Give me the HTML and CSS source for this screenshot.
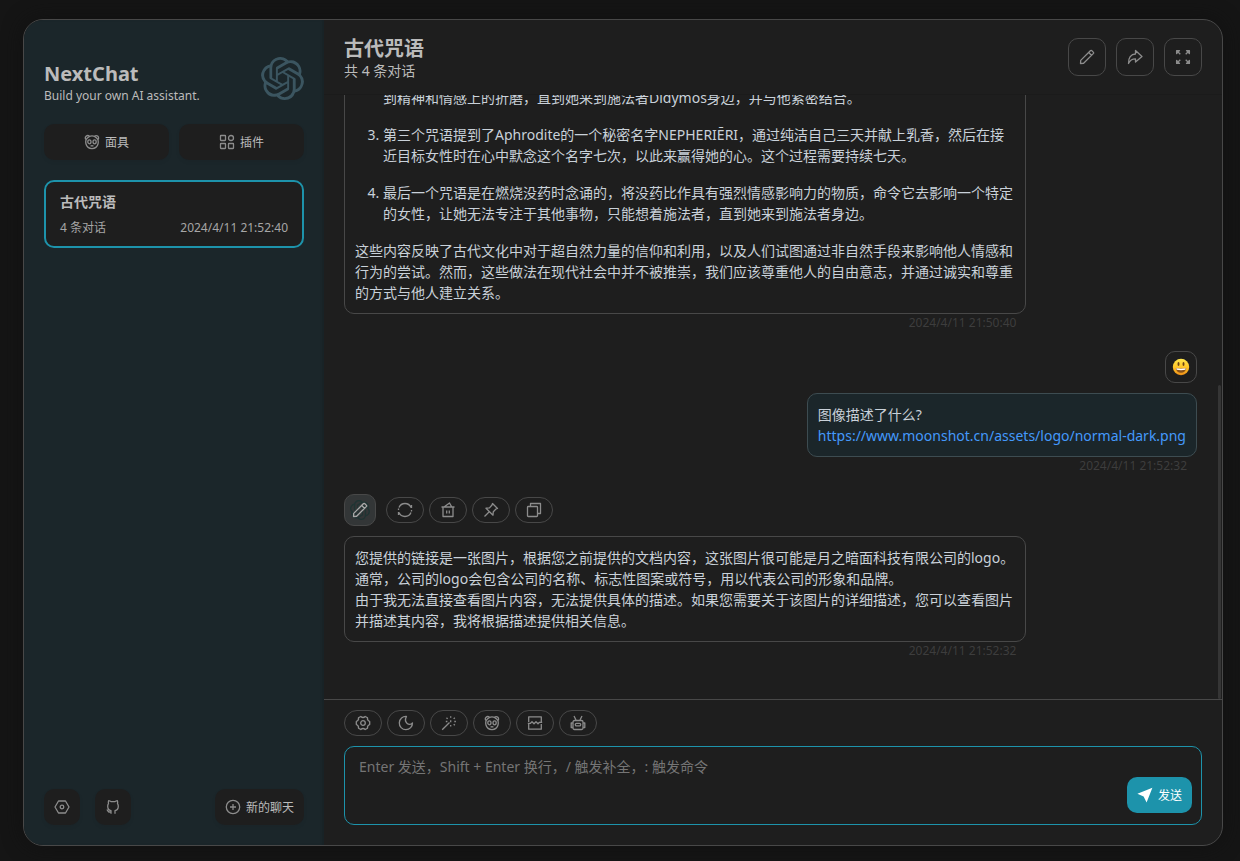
FILE: index.html
```html
<!DOCTYPE html>
<html lang="zh-CN">
<head>
<meta charset="utf-8">
<meta name="viewport" content="width=device-width, initial-scale=1">
<title>NextChat</title>
<link rel="stylesheet" href="styles.css">
</head>
<body>
<svg class="sprite" aria-hidden="true">
  <symbol id="openai" viewBox="0 0 24 24"><path fill="currentColor" d="M22.2819 9.8211a5.9847 5.9847 0 0 0-.5157-4.9108 6.0462 6.0462 0 0 0-6.5098-2.9A6.0651 6.0651 0 0 0 4.9807 4.1818a5.9847 5.9847 0 0 0-3.9977 2.9 6.0462 6.0462 0 0 0 .7427 7.0966 5.98 5.98 0 0 0 .511 4.9107 6.051 6.051 0 0 0 6.5146 2.9001A5.9847 5.9847 0 0 0 13.2599 24a6.0557 6.0557 0 0 0 5.7718-4.2058 5.9894 5.9894 0 0 0 3.9977-2.9001 6.0557 6.0557 0 0 0-.7475-7.0729zm-9.022 12.6081a4.4755 4.4755 0 0 1-2.8764-1.0408l.1419-.0804 4.7783-2.7582a.7948.7948 0 0 0 .3927-.6813v-6.7369l2.02 1.1686a.071.071 0 0 1 .038.052v5.5826a4.504 4.504 0 0 1-4.4945 4.4944zm-9.6607-4.1254a4.4708 4.4708 0 0 1-.5346-3.0137l.142.0852 4.783 2.7582a.7712.7712 0 0 0 .7806 0l5.8428-3.3685v2.3324a.0804.0804 0 0 1-.0332.0615L9.74 19.9502a4.4992 4.4992 0 0 1-6.1408-1.6464zM2.3408 7.8956a4.485 4.485 0 0 1 2.3655-1.9728V11.6a.7664.7664 0 0 0 .3879.6765l5.8144 3.3543-2.0201 1.1685a.0757.0757 0 0 1-.071 0l-4.8303-2.7865A4.504 4.504 0 0 1 2.3408 7.872zm16.5963 3.8558L13.1038 8.364 15.1192 7.2a.0757.0757 0 0 1 .071 0l4.8303 2.7913a4.4944 4.4944 0 0 1-.6765 8.1042v-5.6772a.79.79 0 0 0-.407-.667zm2.0107-3.0231l-.142-.0852-4.7735-2.7818a.7759.7759 0 0 0-.7854 0L9.409 9.2297V6.8974a.0662.0662 0 0 1 .0284-.0615l4.8303-2.7866a4.4992 4.4992 0 0 1 6.6802 4.66zM8.3065 12.863l-2.02-1.1638a.0804.0804 0 0 1-.038-.0567V6.0742a4.4992 4.4992 0 0 1 7.3757-3.4537l-.142.0805L8.704 5.459a.7948.7948 0 0 0-.3927.6813zm1.0976-2.3654l2.602-1.4998 2.6069 1.4998v2.9994l-2.5974 1.4997-2.6067-1.4997Z"/></symbol>
  <symbol id="mask" viewBox="0 0 16 16"><path d="M2.1 5.6A2.2 2.2 0 1 1 5.4 2.3Q8 1.3 10.6 2.3A2.2 2.2 0 1 1 13.9 5.6Q14.6 8 14 10C13.2 13 10.8 14.6 8 14.6S2.8 13 2 10Q1.400 8 2.1 5.600ZM2.300 5.300Q3.500 3.300 5.400 2.600M13.700 5.300Q12.500 3.300 10.600 2.600M6.600 12.200q1.400-1.200 2.800 0"/><ellipse cx="5.400" cy="7.800" rx="1.600" ry="2"/><ellipse cx="10.600" cy="7.800" rx="1.600" ry="2"/></symbol>
  <symbol id="plugin" viewBox="0 0 16 16"><rect x="1.500" y="1.500" width="5" height="5" rx=".5"/><circle cx="12" cy="4" r="2.500"/><rect x="1.500" y="9.500" width="5" height="5" rx=".5"/><rect x="9.500" y="9.500" width="5" height="5" rx=".5"/></symbol>
  <symbol id="hexagon" viewBox="0 0 16 16"><path d="M4.500 2h7L15 8l-3.500 6h-7L1 8Z"/><circle cx="8" cy="8" r="1.800"/></symbol>
  <symbol id="github" viewBox="0 0 16 16"><path d="M6 14.700v-3.100C3.500 11.200 2.700 9.400 2.700 7.300c0-1.200.3-2 .8-2.600-.3-1-.2-2 .1-3.100 1.100.1 1.900.5 2.700 1.100h3.400c.8-.6 1.600-1 2.700-1.100.3 1.100.4 2.100.1 3.100.5.6.8 1.400.8 2.600 0 2.100-.8 3.900-3.300 4.300v3.100M6 13H4.300c-1.500 0-1.300-2.200-2.600-2.200"/></symbol>
  <symbol id="add" viewBox="0 0 16 16"><circle cx="8" cy="8" r="6.700"/><path d="M8 5v6M5 8h6"/></symbol>
  <symbol id="pencil" viewBox="0 0 16 16"><path d="M1.500 14.500l.2-3.100L11.600 1.500q.5-.4 1 0l1.900 1.900q.4.5 0 1L4.600 14.300ZM9.700 3.500l2.800 2.800"/></symbol>
  <symbol id="share" viewBox="0 0 16 16"><path d="M8.500 1.500l6.500 6L8.500 13V9.800C5.500 9.800 3 11 1.500 14.500 1.200 9 4 5 8.500 5Z"/></symbol>
  <symbol id="expand" viewBox="0 0 16 16"><path fill="currentColor" d="M1.600 1.600H4.500L1.600 4.500ZM14.400 1.600H11.500L14.400 4.500ZM1.600 14.400H4.500L1.600 11.500ZM14.400 14.400H11.500L14.400 11.500Z"/><path d="M2 2l3.300 3.300M14 2l-3.300 3.300M2 14l3.300-3.300M14 14l-3.300-3.300"/></symbol>
  <symbol id="reload" viewBox="0 0 16 16"><path d="M2 5.500A6.500 6.500 0 0 1 14 5.500M14.500 3v3M14 10.500A6.500 6.500 0 0 1 2 10.500M1.500 13v-3M1.500 8V6.500M14.500 8v1.500"/></symbol>
  <symbol id="trash" viewBox="0 0 16 16"><path d="M3 5h10v9.500H3ZM1.500 5h13M4.300 4.800L9.500 1l2.200 3.800M6.700 8.500v3M9.300 8.500v3"/></symbol>
  <symbol id="pin" viewBox="0 0 16 16"><path d="M9.500 1.500l5 5-1.500.5-2.700 2.700-.3 3.500-7-7 3.500-.3L9 3ZM6 10l-4.500 4.500"/></symbol>
  <symbol id="copy" viewBox="0 0 16 16"><rect x="1.500" y="4.500" width="10" height="10" rx=".8"/><path d="M4.500 4V1.500h10v10H12"/></symbol>
  <symbol id="gear" viewBox="0 0 16 16"><path d="M5.800 1.500Q8 3.500 10.200 1.500L12.500 2.800Q12 5.300 14.700 6.500v3Q12 10.700 12.500 13.200L10.200 14.500Q8 12.500 5.800 14.500L3.500 13.200Q4 10.700 1.300 9.500v-3Q4 5.300 3.500 2.800Z"/><circle cx="8" cy="8" r="2.300"/></symbol>
  <symbol id="moon" viewBox="0 0 16 16"><path d="M8.500 1.500A6.600 6.600 0 1 0 14.500 7.800C11.500 11.800 5.200 7.500 8.500 1.500Z"/></symbol>
  <symbol id="wand" viewBox="0 0 16 16"><path d="M1.200 14.800l7.300-7.300M9.700 1.200v1.600M5.500 2.800l1.100 1.100M13.800 2.800l-1.100 1.100M4.800 6.500h1.600M13.300 6.500h1.600M12.700 9.200l1.100 1.100M9.700 10v1.600M9.700 5.300v2"/></symbol>
  <symbol id="break" viewBox="0 0 16 16"><path d="M1.700 7V1.800h12.600V7M1.700 9v5.200h12.600V9M.8 8.300h2.700l1.500-1.500 2 2 2-2 2 2 1.500-1.500h2.700"/></symbol>
  <symbol id="robot" viewBox="0 0 16 16"><path d="M4 1l2 4M12 1l-2 4M2.800 8H1.200v4.500h1.600M13.200 8h1.600v4.500h-1.600"/><rect x="3" y="5.500" width="10" height="9" rx="1.500"/><rect x="5.300" y="8.300" width="5.400" height="2.600" rx="1.200"/></symbol>
  <symbol id="plane" viewBox="0 0 16 16"><path fill="currentColor" stroke="none" d="M15.400.8L.4 6.800l6.200 2.600L9.600 15.500Z"/></symbol>
  <symbol id="smile" viewBox="0 0 18 18"><circle cx="9" cy="9" r="8.200" fill="url(#face)" stroke="none"/><ellipse cx="6.500" cy="6" rx="1" ry="1.900" fill="#6b4317" stroke="none"/><ellipse cx="11.500" cy="6" rx="1" ry="1.900" fill="#6b4317" stroke="none"/><path d="M3.800 10Q9 11 14.200 10C14 13 12 14.700 9 14.700S4 13 3.800 10Z" fill="#8a5218" stroke="none"/><path d="M4.200 10.300Q9 11.200 13.800 10.300L13.400 11.700Q9 12.600 4.600 11.700Z" fill="#fff" stroke="none"/></symbol>
  <defs><linearGradient id="face" x1="0" y1="0" x2="0" y2="1"><stop offset="0" stop-color="#ffe64b"/><stop offset=".5" stop-color="#ffc629"/><stop offset="1" stop-color="#ee8f18"/></linearGradient></defs>
</svg>

<div class="window">
  <aside class="sidebar">
    <header class="brand">
      <div>
        <h1 class="brand-title">NextChat</h1>
        <p class="brand-sub">Build your own AI assistant.</p>
      </div>
      <svg class="brand-logo"><use href="#openai"/></svg>
    </header>
    <nav class="shortcuts">
      <button class="side-button"><svg class="icon"><use href="#mask"/></svg>面具</button>
      <button class="side-button"><svg class="icon"><use href="#plugin"/></svg>插件</button>
    </nav>
    <article class="chat-item">
      <h2 class="chat-item-title">古代咒语</h2>
      <div class="chat-item-info"><span>4 条对话</span><time>2024/4/11 21:52:40</time></div>
    </article>
    <footer class="side-footer">
      <button class="side-button" aria-label="设置"><svg class="icon"><use href="#hexagon"/></svg></button>
      <a class="side-button" href="#" aria-label="GitHub"><svg class="icon"><use href="#github"/></svg></a>
      <button class="side-button new-chat"><svg class="icon"><use href="#add"/></svg>新的聊天</button>
    </footer>
  </aside>

  <main class="main">
    <header class="chat-header">
      <div>
        <h2 class="chat-title">古代咒语</h2>
        <p class="chat-sub">共 4 条对话</p>
      </div>
      <div class="header-actions">
        <button class="square-button" aria-label="编辑"><svg class="icon"><use href="#pencil"/></svg></button>
        <button class="square-button" aria-label="分享"><svg class="icon"><use href="#share"/></svg></button>
        <button class="square-button" aria-label="全屏"><svg class="icon"><use href="#expand"/></svg></button>
      </div>
    </header>

    <section class="messages">
      <div class="message">
        <div class="bubble">
          <ol class="list" start="2">
            <li class="continued">到精神和情感上的折磨，直到她来到施法者Didymos身边，并与他紧密结合。</li>
            <li>第三个咒语提到了Aphrodite的一个秘密名字NEPHERIĒRI，通过纯洁自己三天并献上乳香，然后在接近目标女性时在心中默念这个名字七次，以此来赢得她的心。这个过程需要持续七天。</li>
            <li>最后一个咒语是在燃烧没药时念诵的，将没药比作具有强烈情感影响力的物质，命令它去影响一个特定的女性，让她无法专注于其他事物，只能想着施法者，直到她来到施法者身边。</li>
          </ol>
          <p>这些内容反映了古代文化中对于超自然力量的信仰和利用，以及人们试图通过非自然手段来影响他人情感和行为的尝试。然而，这些做法在现代社会中并不被推崇，我们应该尊重他人的自由意志，并通过诚实和尊重的方式与他人建立关系。</p>
        </div>
        <time class="date">2024/4/11 21:50:40</time>
      </div>

      <div class="message user">
        <div class="message-head"><span class="avatar"><svg class="emoji"><use href="#smile"/></svg></span></div>
        <div class="bubble">
          <p>图像描述了什么?<br><a href="#">https://www.moonshot.cn/assets/logo/normal-dark.png</a></p>
        </div>
        <time class="date">2024/4/11 21:52:32</time>
      </div>

      <div class="message">
        <div class="message-head">
          <button class="avatar bot" aria-label="编辑消息"><svg class="bot-logo"><use href="#openai"/></svg><svg class="icon"><use href="#pencil"/></svg></button>
          <div class="pills">
            <button class="pill" aria-label="重试"><svg class="icon"><use href="#reload"/></svg></button>
            <button class="pill" aria-label="删除"><svg class="icon"><use href="#trash"/></svg></button>
            <button class="pill" aria-label="固定"><svg class="icon"><use href="#pin"/></svg></button>
            <button class="pill" aria-label="复制"><svg class="icon"><use href="#copy"/></svg></button>
          </div>
        </div>
        <div class="bubble">
          <p>您提供的链接是一张图片，根据您之前提供的文档内容，这张图片很可能是月之暗面科技有限公司的logo。通常，公司的logo会包含公司的名称、标志性图案或符号，用以代表公司的形象和品牌。<br>由于我无法直接查看图片内容，无法提供具体的描述。如果您需要关于该图片的详细描述，您可以查看图片并描述其内容，我将根据描述提供相关信息。</p>
        </div>
        <time class="date">2024/4/11 21:52:32</time>
      </div>
      <span class="scroll-thumb"></span>
    </section>

    <footer class="composer">
      <div class="pills">
        <button class="pill" aria-label="对话设置"><svg class="icon"><use href="#gear"/></svg></button>
        <button class="pill" aria-label="深色模式"><svg class="icon"><use href="#moon"/></svg></button>
        <button class="pill" aria-label="快捷指令"><svg class="icon"><use href="#wand"/></svg></button>
        <button class="pill" aria-label="所有面具"><svg class="icon"><use href="#mask"/></svg></button>
        <button class="pill" aria-label="清除聊天"><svg class="icon"><use href="#break"/></svg></button>
        <button class="pill" aria-label="模型"><svg class="icon"><use href="#robot"/></svg></button>
      </div>
      <div class="input-wrap">
        <textarea class="input" rows="3" aria-label="消息" placeholder="Enter 发送，Shift + Enter 换行，/ 触发补全，: 触发命令"></textarea>
        <button class="send"><svg class="icon"><use href="#plane"/></svg>发送</button>
      </div>
    </footer>
  </main>
</div>
</body>
</html>
```

FILE: styles.css
```css
* {
  box-sizing: border-box;
}

body {
  display: flex;
  height: 100vh;
  margin: 0;
  padding: 19px 17px 15px 23px;
  background: #151515;
  color: #bbbbbb;
  font-family: "Noto Sans", "Noto Sans CJK SC", sans-serif;
  font-size: 14px;
}

h1, h2, p, ol {
  margin: 0;
}

button, textarea {
  font: inherit;
  color: inherit;
}

button, .side-button {
  cursor: pointer;
}

.sprite {
  position: absolute;
  width: 0;
  height: 0;
}

.icon {
  flex: none;
  width: 16px;
  height: 16px;
  fill: none;
  stroke: currentColor;
  stroke-width: 1.3;
  stroke-linejoin: round;
  color: #8c8c8c;
}

.window {
  display: flex;
  flex: 1;
  min-width: 0;
  overflow: hidden;
  border: 1px solid #484848;
  border-radius: 20px;
  background: #1e1e1e;
  box-shadow: 0 0 20px #111111;
}

/* Sidebar */

.sidebar {
  display: flex;
  flex: none;
  flex-direction: column;
  width: 300px;
  padding: 20px;
  background: #1b262a;
  box-shadow: inset -2px 0 2px rgba(0, 0, 0, 0.1);
}

.brand {
  display: flex;
  justify-content: space-between;
  padding: 17px 0 20px;
}

.brand-title {
  padding-top: 3px;
  font-size: 20px;
  line-height: 28px;
}

.brand-sub {
  font-size: 12px;
  line-height: 16px;
}

.brand-logo {
  width: 43px;
  height: 43px;
  color: #3b5560;
}

.shortcuts {
  display: grid;
  grid-template-columns: 1fr 1fr;
  gap: 10px;
  margin-bottom: 20px;
}

.side-button {
  display: flex;
  align-items: center;
  justify-content: center;
  gap: 5px;
  height: 36px;
  padding: 0 10px;
  border: 0;
  border-radius: 10px;
  background: #1e1e1e;
  box-shadow: 0 2px 4px rgba(0, 0, 0, 0.05);
  font-size: 12px;
}

.chat-item {
  padding: 10px 14px;
  border: 2px solid #1d93ab;
  border-radius: 10px;
  background: #1e1e1e;
}

.chat-item-title {
  font-size: 14px;
  line-height: 20px;
}

.chat-item-info {
  display: flex;
  justify-content: space-between;
  margin-top: 8px;
  color: #a6a6a6;
  font-size: 12px;
  line-height: 16px;
}

.side-footer {
  display: flex;
  gap: 15px;
  margin-top: auto;
}

.new-chat {
  margin-left: auto;
}

/* Chat */

.main {
  display: flex;
  flex: 1;
  flex-direction: column;
  min-width: 0;
}

.chat-header {
  display: flex;
  align-items: center;
  justify-content: space-between;
  height: 75px;
  padding: 0 20px;
  border-bottom: 1px solid #1b1b1b;
}

.chat-title {
  padding-top: 4px;
  font-size: 20px;
  line-height: 24px;
}

.chat-sub {
  line-height: 20px;
}

.header-actions {
  display: flex;
  gap: 10px;
}

.square-button {
  display: flex;
  align-items: center;
  justify-content: center;
  width: 38px;
  height: 38px;
  padding: 0;
  border: 1px solid #484848;
  border-radius: 10px;
  background: none;
}

.messages {
  position: relative;
  display: flex;
  flex: 1;
  flex-direction: column;
  justify-content: flex-end;
  gap: 20px;
  min-height: 0;
  padding: 0 25px 40px 20px;
  overflow: hidden;
}

.message {
  display: flex;
  flex-direction: column;
  align-items: flex-start;
}

.message.user {
  align-items: flex-end;
}

.message-head {
  display: flex;
  align-items: center;
  gap: 10px;
  margin-bottom: 10px;
}

.avatar {
  position: relative;
  display: flex;
  align-items: center;
  justify-content: center;
  width: 32px;
  height: 32px;
  padding: 0;
  border: 1px solid #484848;
  border-radius: 10px;
  background: none;
}

.avatar.bot {
  background: #333637;
}

.avatar.bot .icon {
  position: relative;
  color: #a8a8a8;
}

.bot-logo {
  position: absolute;
  inset: 5px;
  width: 20px;
  height: 20px;
  color: #1f3433;
}

.emoji {
  width: 18px;
  height: 18px;
}

.pills {
  display: flex;
  gap: 5px;
}

.pill {
  display: flex;
  align-items: center;
  justify-content: center;
  width: 38px;
  height: 26px;
  padding: 0;
  border: 1px solid #484848;
  border-radius: 20px;
  background: none;
}

.bubble {
  max-width: 80%;
  padding: 10px;
  border: 1px solid #484848;
  border-radius: 10px;
  color: #c9d1d9;
  line-height: 21px;
}

.user .bubble {
  border-color: #3d4c51;
  background: #1b262a;
}

.bubble a {
  color: #4499fb;
  text-decoration: none;
}

.list {
  margin-bottom: 16px;
  padding-left: 28px;
}

.list li + li {
  margin-top: 16px;
}

.list .continued {
  list-style: none;
}

.date {
  align-self: flex-end;
  padding-right: 10px;
  color: #3d3d3d;
  font-size: 12px;
  line-height: 17px;
}

.message:not(.user) > .date {
  margin-right: 20%;
}

.scroll-thumb {
  position: absolute;
  right: 1px;
  bottom: 0;
  width: 3px;
  height: 52%;
  border-radius: 2px;
  background: #353535;
}

/* Composer */

.composer {
  padding: 10px 20px 20px;
  border-top: 1px solid #484848;
}

.input-wrap {
  position: relative;
  display: flex;
  margin-top: 10px;
}

.input {
  flex: 1;
  height: 79px;
  padding: 10px 90px 10px 14px;
  border: 1px solid #1d93ab;
  border-radius: 10px;
  outline: 0;
  background: transparent;
  line-height: 20px;
  resize: none;
}

.input::placeholder {
  color: #757575;
}

.send {
  position: absolute;
  right: 10px;
  bottom: 12px;
  display: flex;
  align-items: center;
  gap: 5px;
  height: 36px;
  padding: 0 10px;
  border: 0;
  border-radius: 10px;
  background: #1d93ab;
  color: #ffffff;
  font-size: 12px;
}

.send .icon {
  color: #ffffff;
}
```
